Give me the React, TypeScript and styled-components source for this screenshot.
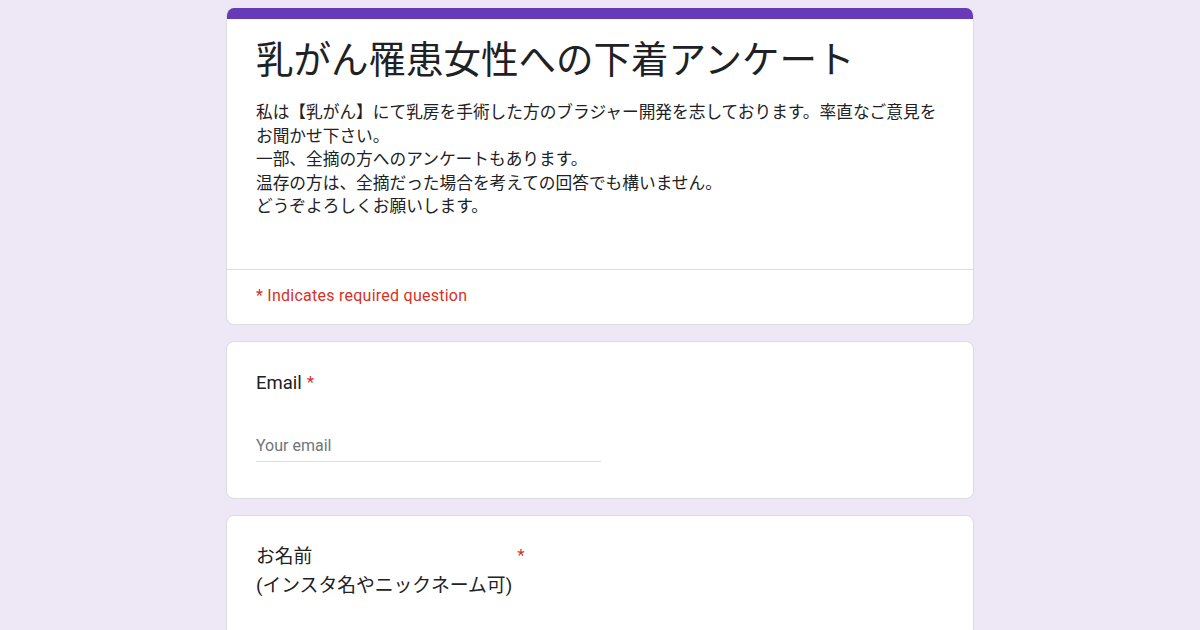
import React from "react";
import styled, { createGlobalStyle } from "styled-components";

const GlobalStyle = createGlobalStyle`
  html, body {
    margin: 0;
    padding: 0;
    background: #ede7f6;
  }
  body {
    font-family: Roboto, "Noto Sans CJK JP", sans-serif;
    color: #202124;
  }
`;

export default function App() {
  return (
    <>
      <GlobalStyle />
      <Page>
        <HeaderCard>
          <TopBar />
          <HeaderBody>
            <FormTitle>乳がん罹患女性への下着アンケート</FormTitle>
            <Description>
              私は【乳がん】にて乳房を手術した方のブラジャー開発を志しております。率直なご意見をお聞かせ下さい。
              {"\n"}一部、全摘の方へのアンケートもあります。
              {"\n"}温存の方は、全摘だった場合を考えての回答でも構いません。
              {"\n"}どうぞよろしくお願いします。
            </Description>
          </HeaderBody>
          <RequiredNote>* Indicates required question</RequiredNote>
        </HeaderCard>

        <QuestionCard>
          <QuestionRow>
            <QuestionTitle>Email</QuestionTitle>
            <Asterisk>*</Asterisk>
          </QuestionRow>
          <TextInput placeholder="Your email" />
        </QuestionCard>

        <QuestionCard $tall>
          <QuestionRow>
            <QuestionTitle $cjk>
              お名前{"\n"}(インスタ名やニックネーム可)
            </QuestionTitle>
            <Asterisk>*</Asterisk>
          </QuestionRow>
        </QuestionCard>
      </Page>
    </>
  );
}

const Page = styled.main`
  width: 748px;
  margin: 8px auto 0;
  display: flex;
  flex-direction: column;
  gap: 16px;
`;

const Card = styled.section`
  background: #fff;
  border: 1px solid #dadce0;
  border-radius: 8px;
  overflow: hidden;
`;

const HeaderCard = styled(Card)`
  border-top: none;
`;

const TopBar = styled.div`
  height: 11px;
  background: #673ab7;
`;

const HeaderBody = styled.div`
  padding: 14px 29px 51px;
  border-bottom: 1px solid #dadce0;
`;

const FormTitle = styled.h1`
  margin: 0;
  font-family: "Noto Sans CJK JP", sans-serif;
  font-size: 37.5px;
  font-weight: 400;
  line-height: 48px;
  color: #202124;
`;

const Description = styled.p`
  margin: 19px 0 0;
  font-family: "Noto Sans CJK JP", sans-serif;
  font-size: 16.7px;
  line-height: 23.6px;
  white-space: pre-wrap;
  color: #202124;
`;

const RequiredNote = styled.div`
  padding: 14px 29px 17px;
  font-family: Roboto, sans-serif;
  font-size: 16px;
  letter-spacing: 0.25px;
  line-height: 23px;
  color: #d93025;
`;

const QuestionCard = styled(Card)<{ $tall?: boolean }>`
  padding: ${(p) => (p.$tall ? "27px 29px 40px" : "28px 29px 36px")};
`;

const QuestionRow = styled.div`
  display: flex;
  align-items: flex-start;
  gap: 5px;
`;

const QuestionTitle = styled.div<{ $cjk?: boolean }>`
  font-family: Roboto, "Noto Sans CJK JP", sans-serif;
  font-size: ${(p) => (p.$cjk ? "18.8px" : "18.5px")};
  line-height: ${(p) => (p.$cjk ? "29px" : "27px")};
  white-space: pre-wrap;
  color: #202124;
`;

const Asterisk = styled.span`
  color: #d93025;
  font-family: Roboto, sans-serif;
  font-size: 17px;
  line-height: 24px;
`;

const TextInput = styled.input`
  display: block;
  margin-top: 38px;
  width: 345px;
  box-sizing: border-box;
  padding: 0 0 4px;
  border: none;
  border-bottom: 1px solid #e0e0e0;
  outline: none;
  background: transparent;
  font-family: Roboto, sans-serif;
  font-size: 16px;
  line-height: 22px;
  color: #202124;

  &::placeholder {
    color: #70757a;
  }
`;
